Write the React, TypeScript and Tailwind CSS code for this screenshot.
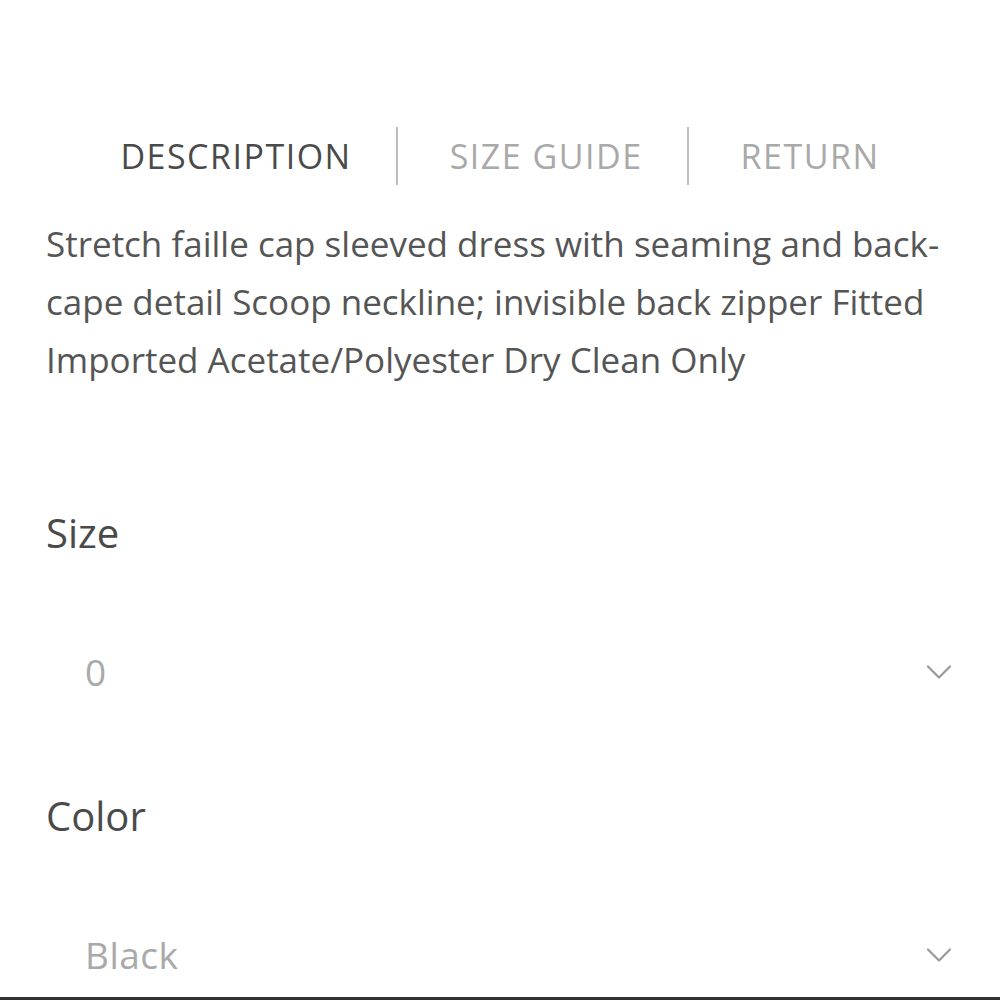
import React from 'react';

function Chevron() {
  return (
    <svg className="w-[26px] h-[16px] text-[#9a9a9a]" viewBox="0 0 26 16" fill="none" stroke="currentColor" strokeWidth="2.2" strokeLinecap="round" strokeLinejoin="round">
      <path d="M2 2.5l11 11 11-11" />
    </svg>
  );
}

function SelectField({ label, value }: { label: string; value: string }) {
  return (
    <div className="flex flex-col">
      <div className="text-[40px] leading-[48px] text-[#4a4a4a]">{label}</div>
      <div className="flex items-center justify-between h-[96px] mt-[67px] pl-[39px] pr-[2px]">
        <span className="text-[37px] tracking-[0.5px] text-[#a9a9a9]">{value}</span>
        <Chevron />
      </div>
    </div>
  );
}

export default function App() {
  const tabs = ['DESCRIPTION', 'SIZE GUIDE', 'RETURN'];
  return (
    <div className="w-[1000px] h-[1000px] bg-white overflow-hidden border-b-[3px] border-[#333]" style={{ fontFamily: '"Open Sans", sans-serif' }}>
      <div className="flex items-center justify-center pt-[127px] h-[185px]">
        {tabs.map((t, i) => (
          <React.Fragment key={t}>
            {i > 0 && <div className="w-[2px] h-[58px] bg-[#bdbdbd] ml-[44px] mr-[52px]" />}
            <span className={`text-[34px] tracking-[1.5px] ${i === 0 ? 'text-[#4a4a4a]' : 'text-[#a9a9a9]'}`}>{t}</span>
          </React.Fragment>
        ))}
      </div>
      <p className="px-[46px] mt-[30px] text-[35px] leading-[58px] text-[#555]">
        Stretch faille cap sleeved dress with seaming and back-cape detail Scoop neckline; invisible back zipper Fitted Imported Acetate/Polyester Dry Clean Only
      </p>
      <div className="px-[46px] mt-[120px] flex flex-col gap-[72px]">
        <SelectField label="Size" value="0" />
        <SelectField label="Color" value="Black" />
      </div>
    </div>
  );
}
